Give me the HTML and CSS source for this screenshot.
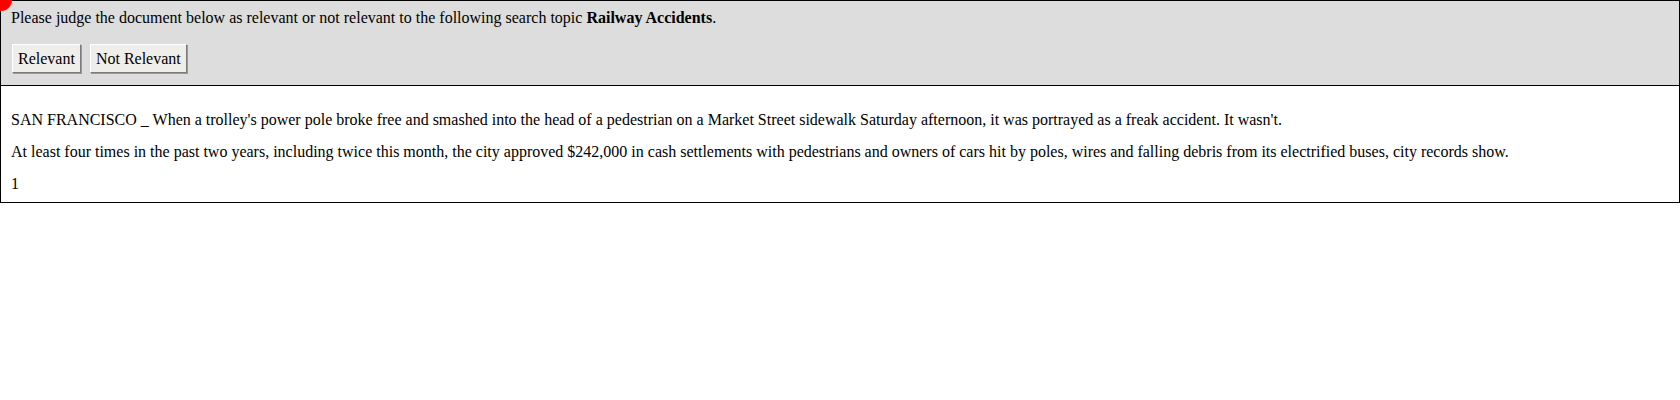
FILE: index.html
```html
<!DOCTYPE html>
<html>
<head>
<meta charset="utf-8">
<link rel="stylesheet" href="styles.css">
</head>
<body>
<div class="dot"></div>
<div class="panel">
  <p class="prompt">Please judge the document below as relevant or not relevant to the following search topic <b>Railway Accidents</b>.</p>
  <div class="actions">
    <button class="btn">Relevant</button>
    <button class="btn">Not Relevant</button>
  </div>
</div>
<div class="doc">
  <p>SAN FRANCISCO _ When a trolley's power pole broke free and smashed into the head of a pedestrian on a Market Street sidewalk Saturday afternoon, it was portrayed as a freak accident. It wasn't.</p>
  <p>At least four times in the past two years, including twice this month, the city approved $242,000 in cash settlements with pedestrians and owners of cars hit by poles, wires and falling debris from its electrified buses, city records show.</p>
  <p class="last">1</p>
</div>
</body>
</html>
```

FILE: styles.css
```css
html, body {
  margin: 0;
  padding: 0;
  background: #fff;
}
body {
  font-family: "Liberation Serif", "Times New Roman", serif;
  font-size: 16px;
  color: #000;
  position: relative;
}
.dot {
  position: absolute;
  left: -10px;
  top: -11px;
  width: 22px;
  height: 22px;
  border-radius: 50%;
  background: #f00;
  z-index: 2;
}
.panel {
  background: #dddddd;
  border: 1px solid #000;
  padding: 0 10px;
  height: 84px;
  box-sizing: content-box;
}
.prompt {
  margin: 0;
  padding-top: 8px;
  line-height: 18px;
}
.actions {
  display: flex;
  gap: 9px;
  margin-top: 17px;
  padding-left: 1px;
}
.btn {
  font-family: "Liberation Serif", "Times New Roman", serif;
  font-size: 16px;
  color: #000;
  background: #f0eeea;
  border: 1px solid;
  border-color: #fff #7a7a7a #7a7a7a #fff;
  box-shadow: 1px 1px 0 #9a9a9a;
  padding: 4px 5px;
  height: 29px;
  line-height: 19px;
}
.doc {
  border: 1px solid #000;
  border-top: none;
  padding: 16px 10px 1px;
}
.doc p {
  margin: 8px 0 12px;
  line-height: 20px;
}
.doc p + p {
  margin-top: 0;
}
.doc p.last {
  margin-bottom: 7px;
}
```
